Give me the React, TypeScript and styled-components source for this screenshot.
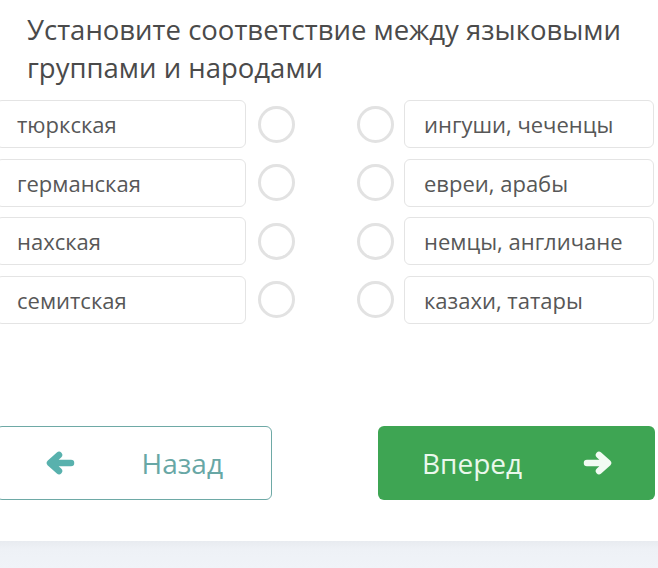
import styled, { createGlobalStyle } from "styled-components";

const leftItems = ["тюркская", "германская", "нахская", "семитская"];
const rightItems = ["ингуши, чеченцы", "евреи, арабы", "немцы, англичане", "казахи, татары"];

function Arrow({ flip }: { flip?: boolean }) {
  return (
    <ArrowSvg viewBox="0 0 30 24" $flip={flip}>
      <path d="M26 12H6M14 4L5 12L14 20" />
    </ArrowSvg>
  );
}

function App() {
  return (
    <Page>
      <GlobalStyle />
      <Title>
        Установите соответствие между языковыми
        <br />
        группами и народами
      </Title>

      <Rows>
        {leftItems.map((left, index) => (
          <Row key={left}>
            <Pair>
              <Item>{left}</Item>
              <Radio />
            </Pair>
            <Pair $right>
              <Radio />
              <Item $right>{rightItems[index]}</Item>
            </Pair>
          </Row>
        ))}
      </Rows>

      <Actions>
        <BackButton>
          <Arrow />
          <span>Назад</span>
        </BackButton>
        <NextButton>
          <span>Вперед</span>
          <Arrow flip />
        </NextButton>
      </Actions>

      <Footer />
    </Page>
  );
}

const GlobalStyle = createGlobalStyle`
  html, body {
    margin: 0;
    padding: 0;
    background: #ffffff;
    overflow: hidden;
  }

  body {
    font-family: "Open Sans", "Noto Sans", sans-serif;
  }
`;

const Page = styled.div`
  width: 658px;
  height: 568px;
  display: flex;
  flex-direction: column;
  overflow: hidden;
`;

const Title = styled.h1`
  margin: 0;
  padding: 11px 0 0 27px;
  font-size: 27.5px;
  font-weight: 400;
  line-height: 38px;
  color: #4a4a4a;
`;

const Rows = styled.div`
  display: flex;
  flex-direction: column;
  gap: 10.5px;
  margin: 13px 0 0 -4px;
  width: 658px;
`;

const Row = styled.div`
  display: flex;
  justify-content: space-between;
  align-items: center;
`;

const Pair = styled.div<{ $right?: boolean }>`
  display: flex;
  align-items: center;
  gap: ${(p) => (p.$right ? "10px" : "12px")};
`;

const Item = styled.div<{ $right?: boolean }>`
  box-sizing: border-box;
  width: 250px;
  height: 48px;
  display: flex;
  align-items: center;
  padding-left: ${(p) => (p.$right ? "19px" : "20px")};
  border: 1px solid #e4e4e4;
  border-radius: 6px;
  font-size: 22px;
  color: #575757;
`;

const Radio = styled.div`
  box-sizing: border-box;
  width: 37px;
  height: 37px;
  border: 3px solid #e2e2e2;
  border-radius: 50%;
`;

const Actions = styled.div`
  display: flex;
  gap: 106px;
  margin: 102px 0 0 -4px;
`;

const ButtonBase = styled.button`
  box-sizing: border-box;
  height: 74px;
  display: flex;
  align-items: center;
  justify-content: space-between;
  border-radius: 6px;
  font-family: "Open Sans", "Noto Sans", sans-serif;
  font-size: 28px;
  cursor: pointer;
`;

const ArrowSvg = styled.svg<{ $flip?: boolean }>`
  width: 30px;
  height: 24px;
  transform: ${(p) => (p.$flip ? "scaleX(-1)" : "none")};

  path {
    fill: none;
    stroke: currentColor;
    stroke-width: 6.5;
    stroke-linecap: round;
    stroke-linejoin: round;
  }
`;

const BackButton = styled(ButtonBase)`
  width: 276px;
  padding: 0 48px 0 48px;
  background: #ffffff;
  border: 1px solid #6ea9a6;
  color: #68a7a5;

  svg {
    color: #58b1ad;
  }
`;

const NextButton = styled(ButtonBase)`
  width: 277px;
  padding: 0 42px 0 44px;
  background: #3ea553;
  border: none;
  color: #eaf8ec;

  svg {
    color: #f2fbf3;
  }
`;

const Footer = styled.div`
  margin-top: 41px;
  flex: 1;
  background: linear-gradient(#e8ebf0, #eef1f6 8px, #f0f3f8);
`;

export default App;
